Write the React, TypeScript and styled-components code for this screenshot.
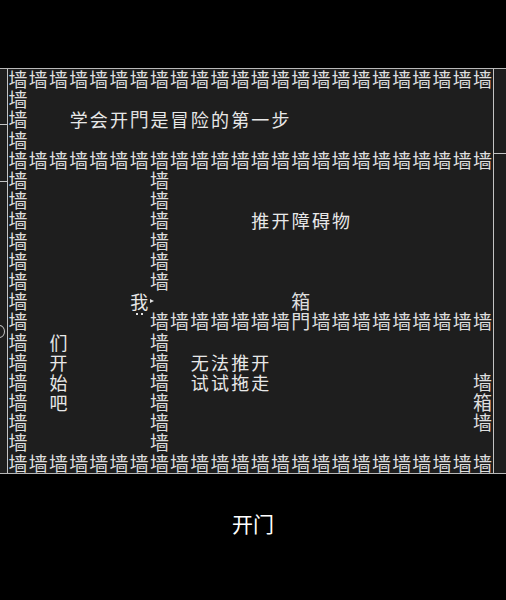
import styled, { createGlobalStyle } from 'styled-components'

const W = '墙'
const S = ' '

function row(...parts: string[]) {
  return Array.from(parts.join(''))
}

function rep(ch: string, n: number) {
  return ch.repeat(n)
}

const MAP: string[][] = [
  row(rep(W, 24)),
  row(W, rep(S, 23)),
  row(W, rep(S, 2), '学会开門是冒险的第一步', rep(S, 10)),
  row(W, rep(S, 23)),
  row(rep(W, 24)),
  row(W, rep(S, 6), W, rep(S, 16)),
  row(W, rep(S, 6), W, rep(S, 16)),
  row(W, rep(S, 6), W, rep(S, 4), '推开障碍物', rep(S, 7)),
  row(W, rep(S, 6), W, rep(S, 16)),
  row(W, rep(S, 6), W, rep(S, 16)),
  row(W, rep(S, 6), W, rep(S, 16)),
  row(W, rep(S, 5), '我', rep(S, 7), '箱', rep(S, 9)),
  row(W, rep(S, 6), rep(W, 7), '門', rep(W, 9)),
  row(W, S, '们', rep(S, 4), W, rep(S, 16)),
  row(W, S, '开', rep(S, 4), W, S, '无法推开', rep(S, 11)),
  row(W, S, '始', rep(S, 4), W, S, '试试拖走', rep(S, 10), W),
  row(W, S, '吧', rep(S, 4), W, rep(S, 15), '箱'),
  row(W, rep(S, 6), W, rep(S, 15), W),
  row(W, rep(S, 6), W, rep(S, 16)),
  row(rep(W, 24)),
]

const TILES = new Set(['墙', '門', '箱'])

export default function App() {
  return (
    <>
      <GlobalStyle />
      <Screen>
        <TopBar />
        <Board>
          <LeftTick $top={55} />
          <LeftTick $top={112} />
          <RightTick $top={84} />
          <EdgeRing />
          <Grid>
            {MAP.map((cells, r) =>
              cells.map((ch, c) => (
                <Cell
                  key={`${r}-${c}`}
                  $tile={TILES.has(ch)}
                  $player={ch === '我'}
                >
                  {ch === S ? '' : ch}
                </Cell>
              ))
            )}
          </Grid>
        </Board>
        <Caption>开门</Caption>
      </Screen>
    </>
  )
}

const GlobalStyle = createGlobalStyle`
  html, body {
    margin: 0;
    padding: 0;
    background: #000;
  }
  body {
    font-family: "Noto Sans CJK SC", "Noto Sans", sans-serif;
  }
`

const Screen = styled.div`
  width: 506px;
  height: 600px;
  display: flex;
  flex-direction: column;
  background: #000;
  overflow: hidden;
`

const TopBar = styled.div`
  height: 68px;
  flex-shrink: 0;
`

const Board = styled.div`
  position: relative;
  height: 404px;
  background: #1e1e1e;
  border-top: 1px solid #b8b8b8;
  border-bottom: 1px solid #b8b8b8;
`

const Grid = styled.div`
  margin-left: 7px;
  width: 484.8px;
  height: 404px;
  border-left: 1px solid #c4c4c4;
  border-right: 1px solid #c4c4c4;
  display: grid;
  grid-template-columns: repeat(24, 20.2px);
  grid-template-rows: repeat(20, 20.2px);
`

const Cell = styled.div<{ $tile: boolean; $player: boolean }>`
  position: relative;
  display: flex;
  align-items: center;
  justify-content: center;
  font-size: ${(p) => (p.$tile ? '19px' : '18px')};
  line-height: 20px;
  color: ${(p) => (p.$tile ? '#dedede' : '#e8e8e8')};
  white-space: nowrap;

  ${(p) =>
    p.$player &&
    `
    &::after {
      content: '';
      position: absolute;
      right: -5px;
      top: 8px;
      border-top: 2.5px solid transparent;
      border-bottom: 2.5px solid transparent;
      border-left: 4px solid #e0e0e0;
    }
    &::before {
      content: '';
      position: absolute;
      left: 7px;
      bottom: -4px;
      width: 2px;
      height: 2px;
      background: #e0e0e0;
      box-shadow: 5px 0 0 #e0e0e0;
    }
  `}
`

const LeftTick = styled.div<{ $top: number }>`
  position: absolute;
  left: 0;
  top: ${(p) => p.$top}px;
  width: 8px;
  height: 1px;
  background: #c4c4c4;
`

const RightTick = styled.div<{ $top: number }>`
  position: absolute;
  right: 0;
  top: ${(p) => p.$top}px;
  width: 13px;
  height: 1px;
  background: #c4c4c4;
`

const EdgeRing = styled.div`
  position: absolute;
  left: -6px;
  top: 256px;
  width: 9px;
  height: 11px;
  border: 1px solid #c4c4c4;
  border-radius: 50%;
`

const Caption = styled.div`
  margin-top: 35px;
  text-align: center;
  color: #fff;
  font-size: 21px;
  line-height: 28px;
`
